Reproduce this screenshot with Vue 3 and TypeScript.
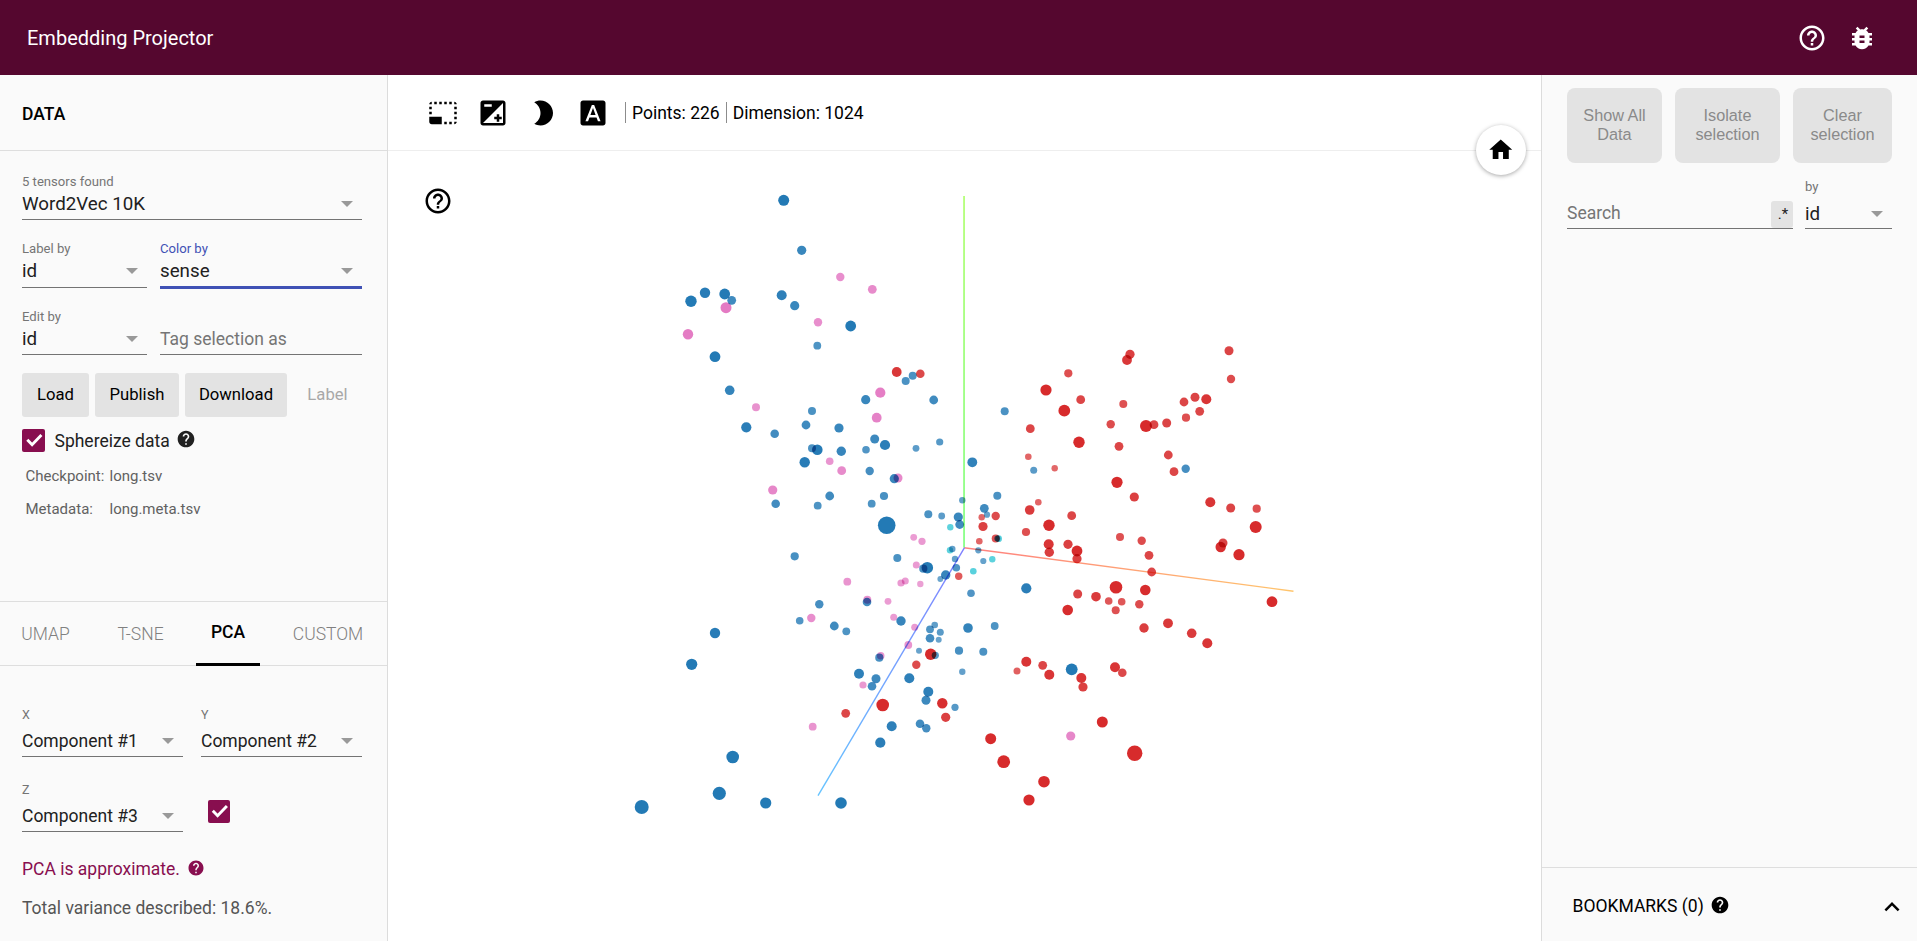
<script setup lang="ts">
import { computed } from 'vue'

type Row = [number, number, number]

const icons = {
  helpOutline:
    'M11 18h2v-2h-2v2zm1-16C6.48 2 2 6.48 2 12s4.48 10 10 10 10-4.48 10-10S17.52 2 12 2zm0 18c-4.41 0-8-3.59-8-8s3.59-8 8-8 8 3.59 8 8-3.59 8-8 8zm0-14c-2.21 0-4 1.79-4 4h2c0-1.1.9-2 2-2s2 .9 2 2c0 2-3 1.75-3 5h2c0-2.25 3-2.5 3-5 0-2.21-1.79-4-4-4z',
  help: 'M12 2C6.48 2 2 6.48 2 12s4.48 10 10 10 10-4.48 10-10S17.52 2 12 2zm1 17h-2v-2h2v2zm2.07-7.75l-.9.92C13.45 12.9 13 13.5 13 15h-2v-.5c0-1.1.45-2.1 1.17-2.83l1.24-1.26c.37-.36.59-.86.59-1.41 0-1.1-.9-2-2-2s-2 .9-2 2H8c0-2.21 1.79-4 4-4s4 1.79 4 4c0 .88-.36 1.68-.93 2.25z',
  bug: 'M20 8h-2.81c-.45-.78-1.07-1.45-1.82-1.96L17 4.41 15.59 3l-2.17 2.17C12.96 5.06 12.49 5 12 5c-.49 0-.96.06-1.41.17L8.41 3 7 4.41l1.62 1.63C7.88 6.55 7.26 7.22 6.81 8H4v2h2.09c-.05.33-.09.66-.09 1v1H4v2h2v1c0 .34.04.67.09 1H4v2h2.81c1.04 1.79 2.97 3 5.19 3s4.15-1.21 5.19-3H20v-2h-2.09c.05-.33.09-.66.09-1v-1h2v-2h-2v-1c0-.34-.04-.67-.09-1H20V8zm-6 8h-4v-2h4v2zm0-4h-4v-2h4v2z',
  home: 'M10 20v-6h4v6h5v-8h3L12 3 2 12h3v8z',
  expandLess: 'M12 8l-6 6 1.41 1.41L12 10.83l4.59 4.58L18 14z',
  check: 'M5.3 10.700L10.100 15.700L19.400 6',
}

const tools = [
  'M23 15h-2v2h2v-2zm0-4h-2v2h2v-2zm0 8h-2v2c1 0 2-1 2-2zM15 3h-2v2h2V3zm8 4h-2v2h2V7zm-2-4v2h2c0-1-1-2-2-2zM3 21h8v-6H1v4c0 1.1.9 2 2 2zM3 7H1v2h2V7zm12 12h-2v2h2v-2zm4-16h-2v2h2V3zm0 16h-2v2h2v-2zM3 3C2 3 1 4 1 5h2V3zm0 8H1v2h2v-2zm8-8H9v2h2V3zM7 3H5v2h2V3z',
  'M15 17v2h2v-2h2v-2h-2v-2h-2v2h-2v2h2zm5-15H4c-1.100 0-2 .9-2 2v16c0 1.100.9 2 2 2h16c1.100 0 2-.9 2-2V4c0-1.100-.9-2-2-2zM5 5h6v2H5V5zm15 15H4L20 4v16z',
  'M10 2c-1.820 0-3.530.5-5 1.350C7.990 5.080 10 8.300 10 12s-2.010 6.920-5 8.650C6.470 21.500 8.180 22 10 22c5.520 0 10-4.480 10-10S15.520 2 10 2z',
  'M9.930 13.500h4.140L12 7.980zM20 2H4c-1.100 0-2 .9-2 2v16c0 1.100.9 2 2 2h16c1.100 0 2-.9 2-2V4c0-1.100-.9-2-2-2zm-4.050 16.500l-1.140-3H9.170l-1.120 3H5.960l5.110-13h1.860l5.110 13h-2.090z',
]

const tabs = ['UMAP', 'T-SNE', 'PCA', 'CUSTOM']
const activeTab = 'PCA'

// Projected points of each sense: x, y, radius.
const clusters: { color: string; rows: Row[] }[] = [
  {
    color: '#1f77b4',
    rows: [
      [783.7, 200.3, 5.5], [801.7, 250.3, 4.6], [691, 301.3, 5.7], [705, 292.7, 5.2], [724.7, 294, 5.4],
      [731.7, 300.3, 4.4], [781.7, 295.3, 5], [794.7, 305.7, 4.6], [850.7, 326, 5.4], [817.3, 345.7, 3.9],
      [715, 356.7, 5.4], [729.7, 390.3, 4.8], [746.3, 427.3, 5.1], [774.7, 433.7, 4.3], [812, 411, 4],
      [806, 425, 4.4], [839, 428, 4.6], [812, 448.3, 4], [817.3, 449.7, 5.3], [841.3, 451.3, 4.7],
      [804.7, 462.3, 5.2], [912.7, 375.7, 4], [905.7, 381, 4], [865.7, 399.7, 4.6], [933.7, 400, 4.4],
      [874.7, 439, 4.5], [885, 445, 5.1], [866, 449.7, 3.8], [916, 448.3, 3.4], [939.7, 442, 3.6],
      [869.7, 471, 4.2], [894.3, 478.7, 4.6], [829.7, 496, 4.4], [884, 496, 4.1], [871.7, 503.7, 3.9],
      [775.7, 503.7, 4.3], [817.7, 505.7, 3.9], [928.3, 514.3, 4], [941.7, 516, 3.4], [886.7, 525.3, 8.8],
      [794.7, 556.3, 4.1], [897.3, 558, 4], [923.3, 568.7, 4.1], [927.3, 567.7, 5.8], [945.7, 575, 4.7],
      [940.3, 579, 2.9], [867, 602, 4.3], [819.3, 604.3, 4.2], [799.7, 620.7, 3.8], [834.3, 626, 4.4],
      [846.3, 631.3, 3.9], [715, 633, 5.2], [691.7, 664.3, 5.6], [901, 621, 4.7], [934.7, 625, 3.3],
      [930, 629.3, 3.9], [940.3, 632.3, 3.5], [930, 638.3, 4.3], [938.7, 639.7, 3], [919, 650.7, 3],
      [935.3, 655.3, 3.6], [879.3, 657.7, 4.1], [859, 673.7, 5], [876, 678.7, 4.5], [872, 686.3, 4.3],
      [909.3, 678.3, 5], [928.3, 691.7, 5], [926, 700.3, 4.5], [920, 723.7, 4.3], [926.3, 728.3, 4.2],
      [891.7, 726.3, 5], [880.3, 742.7, 5.1], [732.7, 757, 6.3], [719.3, 793.3, 6.6], [641.7, 807, 7],
      [765.7, 803, 5.6], [841, 803, 5.8], [1004.7, 411.3, 4], [972.3, 462.3, 4.9], [1033.7, 470.3, 3.5],
      [1185.7, 468.7, 4.2], [997.3, 495.7, 4], [962.3, 500.3, 3.2], [984.3, 508.3, 4.4], [987, 514.7, 3.1],
      [958.3, 517, 4.6], [959.7, 524.5, 4.4], [952.3, 549, 3.2], [978.3, 550.3, 3.1], [997.3, 538.5, 3],
      [955, 559, 3.2], [983.3, 561, 3.1], [956.3, 567.7, 3.8], [971, 593.3, 3.8], [1026.3, 588.3, 5.1],
      [968, 628, 4.8], [994.7, 626, 3.9], [959, 650.7, 4.1], [983.3, 651.7, 4], [962.3, 671.7, 3.2],
      [955, 707.3, 3.6], [1071.7, 669.3, 5.9],
    ],
  },
  {
    color: '#e377c2',
    rows: [
      [840.3, 277, 4.2], [872.3, 289.3, 4.4], [726, 307.7, 5.5], [688, 334.3, 5.2], [818, 322.3, 4.2],
      [756, 407.3, 4], [880.3, 392.7, 5.1], [876.7, 417.7, 4.9], [829.7, 461.3, 3.8], [841.7, 470.7, 4.4],
      [898, 478, 4.5], [772.7, 490, 4.6], [913.7, 537.3, 3.4], [922, 541.3, 3.6], [916.3, 565, 3.5],
      [847.3, 581.7, 3.9], [901, 583, 3.6], [905.3, 581, 3.5], [920.3, 584, 3.2], [867.3, 599.7, 4],
      [888, 601.3, 3.4], [811.3, 618, 4.2], [893.7, 617.3, 3.5], [914.7, 627.3, 3.5], [908.3, 645, 3.9],
      [880.7, 655.7, 3.8], [863, 685, 3.6], [812.7, 726.7, 3.9], [1070.7, 736, 4.6],
    ],
  },
  {
    color: '#d62728',
    rows: [
      [896.7, 372, 4.9], [920.3, 373.7, 4.3], [930.7, 654.3, 5.7], [916.3, 664.7, 4.2], [882.7, 705, 6.3],
      [845.7, 713.3, 4.4], [942.3, 703.3, 5.2], [945.7, 717.3, 4.6], [1130, 354.3, 4.6], [1127, 360, 4.9],
      [1229, 350.7, 4.5], [1231, 379, 4.2], [1068.3, 373.3, 4.1], [1046, 390, 5.6], [1080.7, 399.7, 4.4],
      [1123.3, 404, 4], [1064.3, 410.7, 5.9], [1184, 402, 4.4], [1195, 397.3, 4.5], [1206.3, 399.3, 5],
      [1199.7, 411.3, 4.4], [1186, 417.7, 4.1], [1166.7, 423, 4.5], [1154, 424.7, 4.4], [1146, 426, 6],
      [1110.7, 424.3, 4.2], [1030.3, 428.7, 4.4], [1079, 442.3, 5.7], [1119, 446.3, 4.4], [1028.3, 456.7, 3.3],
      [1054.7, 468.3, 3.2], [1168.3, 455, 4.4], [1174, 471.7, 4.4], [1117, 482.3, 5.6], [1134.3, 497, 4.6],
      [1038.3, 502.3, 3.3], [1029.7, 510, 4.8], [1210.3, 502.3, 5], [1230.7, 508, 4.5], [1256.7, 508.7, 4.1],
      [1255.7, 527, 6], [1071.7, 515.7, 4.4], [1049, 525.3, 5.7], [1026, 532, 4.1], [1120, 537, 4],
      [1141.7, 540.7, 4.2], [1223, 543, 4.5], [1220.7, 547, 5.2], [1239, 554.7, 5.6], [1048.7, 544.3, 5],
      [1049.3, 552.3, 4.7], [1068, 544.3, 4.6], [1077, 551, 5.4], [1077, 558.7, 4.6], [1149, 555.3, 4.4],
      [1151.7, 572, 4.4], [981.7, 517.2, 3.2], [995.7, 516, 4.2], [983, 526.5, 4.6], [995.7, 538.5, 4],
      [979.3, 541.3, 3.3], [958.7, 576.3, 3.7], [1116, 587.3, 6.3], [1145.3, 590, 5.3], [1077.7, 594, 4.5],
      [1096, 596.7, 4.8], [1108.7, 601, 3.8], [1121.7, 601.7, 3.8], [1139.3, 604.3, 4.2], [1115.7, 610.3, 4],
      [1067.7, 610, 5.3], [1272, 601.7, 5.4], [1144, 628, 4.7], [1168, 623.3, 4.9], [1191.7, 633.3, 4.8],
      [1207.3, 643.3, 5], [1026.3, 661.7, 5], [1042.7, 665.3, 4.4], [1017, 671, 3.5], [1049.3, 674.7, 5],
      [1081.3, 678, 5], [1083, 687, 4.6], [1115, 667.3, 5], [1122.3, 672.7, 4.3], [1102.3, 722, 5.5],
      [1134.7, 753.3, 7.7], [990.7, 738.7, 5.5], [1003.7, 761.7, 6.4], [1044, 781.7, 5.8], [1029, 800, 5.6],
    ],
  },
  {
    color: '#17becf',
    rows: [
      [950.3, 527.3, 3.2], [950, 550.3, 3.2], [998.6, 538.7, 3.4], [992.3, 559.3, 3.2], [973.3, 571.3, 3.3],
    ],
  },
]

// Distant points are smaller and fade into the white fog.
const points = computed(() =>
  clusters.flatMap(({ color, rows }) =>
    rows.map(([x, y, r]) => ({ x, y, r, color, opacity: Math.min(0.98, 0.66 + (r - 2.9) * 0.13) })),
  ),
)
</script>

<template>
  <div class="app">
    <header class="bar">
      <h1>Embedding Projector</h1>
      <div class="bar-icons">
        <svg class="icon" viewBox="0 0 24 24"><path :d="icons.helpOutline" /></svg>
        <svg class="icon" viewBox="0 0 24 24"><path :d="icons.bug" /></svg>
      </div>
    </header>

    <div class="main">
      <aside class="left">
        <div class="panel-title">DATA</div>

        <section class="data">
          <div class="field">
            <label>5 tensors found</label>
            <div class="value big"><span>Word2Vec 10K</span><i class="caret"></i></div>
          </div>
          <div class="pair labels">
            <div class="field">
              <label>Label by</label>
              <div class="value big"><span>id</span><i class="caret"></i></div>
            </div>
            <div class="field focused">
              <label>Color by</label>
              <div class="value big"><span>sense</span><i class="caret"></i></div>
            </div>
          </div>
          <div class="pair edit">
            <div class="field">
              <label>Edit by</label>
              <div class="value big"><span>id</span><i class="caret"></i></div>
            </div>
            <div class="field">
              <label></label>
              <div class="value hint"><span>Tag selection as</span></div>
            </div>
          </div>

          <div class="buttons">
            <button class="load">Load</button>
            <button class="publish">Publish</button>
            <button class="download">Download</button>
            <button class="flat">Label</button>
          </div>

          <div class="sphere">
            <span class="checkbox"><svg viewBox="0 0 23 23"><path :d="icons.check" /></svg></span>
            <span>Sphereize data</span>
            <svg class="icon small" viewBox="0 0 24 24"><path :d="icons.help" /></svg>
          </div>

          <dl class="files">
            <dt>Checkpoint:</dt><dd>long.tsv</dd>
            <dt>Metadata:</dt><dd>long.meta.tsv</dd>
          </dl>
        </section>

        <nav class="tabs">
          <div v-for="tab in tabs" :key="tab" class="tab" :class="{ active: tab === activeTab }">{{ tab }}</div>
        </nav>

        <section class="pca">
          <div class="axes">
            <div class="field">
              <label>X</label>
              <div class="value"><span>Component #1</span><i class="caret"></i></div>
            </div>
            <div class="field">
              <label>Y</label>
              <div class="value"><span>Component #2</span><i class="caret"></i></div>
            </div>
            <div class="field">
              <label>Z</label>
              <div class="value"><span>Component #3</span><i class="caret"></i></div>
            </div>
            <span class="checkbox z"><svg viewBox="0.500 0 23 23"><path :d="icons.check" /></svg></span>
          </div>
          <div class="approx">
            <span>PCA is approximate.</span>
            <svg class="icon" viewBox="0 0 24 24"><path :d="icons.help" /></svg>
          </div>
          <div class="variance">Total variance described: 18.6%.</div>
        </section>
      </aside>

      <main class="center">
        <div class="toolbar">
          <svg v-for="(d, i) in tools" :key="i" class="icon" viewBox="0 0 24 24"><path :d="d" /></svg>
          <div class="stat first">Points: 226</div>
          <div class="stat">Dimension: 1024</div>
        </div>
        <div class="home"><svg viewBox="0 0 24 24"><path :d="icons.home" /></svg></div>
        <div class="stage">
          <svg class="plot" viewBox="388 151 1153 790">
            <defs>
              <linearGradient id="ax" gradientUnits="userSpaceOnUse" x1="964" y1="548" x2="1293" y2="591">
                <stop offset="0" stop-color="#ff8080" /><stop offset="1" stop-color="#ffc56c" />
              </linearGradient>
              <linearGradient id="ay" gradientUnits="userSpaceOnUse" x1="964" y1="548" x2="964" y2="196">
                <stop offset="0" stop-color="#80ff80" /><stop offset="1" stop-color="#b0ff70" />
              </linearGradient>
              <linearGradient id="az" gradientUnits="userSpaceOnUse" x1="964" y1="548" x2="818" y2="796">
                <stop offset="0" stop-color="#8080ff" /><stop offset="1" stop-color="#66c4ff" />
              </linearGradient>
            </defs>
            <path d="M964 547.700L1293.500 591.200" stroke="url(#ax)" />
            <path d="M963.200 196h1.700V547.500h-1.700z" fill="url(#ay)" stroke="none" />
            <path d="M964.500 547.700L818 795.700" stroke="url(#az)" />
            <circle
              v-for="(p, i) in points"
              :key="i"
              :cx="p.x"
              :cy="p.y"
              :r="p.r"
              :fill="p.color"
              :fill-opacity="p.opacity"
            />
          </svg>
          <svg class="icon hint-icon" viewBox="0 0 24 24"><path :d="icons.helpOutline" /></svg>
        </div>
      </main>

      <aside class="right">
        <div class="actions">
          <button>Show All<br />Data</button>
          <button>Isolate<br />selection</button>
          <button>Clear<br />selection</button>
        </div>
        <div class="search">
          <div class="field">
            <label></label>
            <div class="value hint"><span>Search</span><span class="regex">.*</span></div>
          </div>
          <div class="field by">
            <label>by</label>
            <div class="value big"><span>id</span><i class="caret"></i></div>
          </div>
        </div>
        <div class="bookmarks">
          <span>BOOKMARKS (0)</span>
          <svg class="icon small" viewBox="0 0 24 24"><path :d="icons.help" /></svg>
          <svg class="icon expand" viewBox="0 0 24 24"><path :d="icons.expandLess" /></svg>
        </div>
      </aside>
    </div>
  </div>
</template>

<style>
body {
  overflow: hidden;
}
</style>

<style scoped>
.app {
  display: flex;
  flex-direction: column;
  height: 941px;
  font: 400 17.5px Roboto, sans-serif;
  color: #212121;
  background: #fff;
}
.app * {
  box-sizing: border-box;
}
.icon {
  display: block;
  width: 30px;
  height: 30px;
  fill: currentColor;
  flex: none;
}
.icon.small {
  width: 20px;
  height: 20px;
}
.bar {
  display: flex;
  align-items: center;
  justify-content: space-between;
  height: 75px;
  flex: none;
  padding: 0 40px 0 27px;
  background: #55072f;
  color: #fff;
}
.bar h1 {
  margin: 0;
  font-size: 20px;
  font-weight: 400;
}
.bar-icons {
  display: flex;
  gap: 20px;
}
.main {
  display: flex;
  flex: 1;
  min-height: 0;
}
.left {
  display: flex;
  flex-direction: column;
  width: 388px;
  flex: none;
  background: #fafafa;
  border-right: 1px solid #dcdcdc;
}
.panel-title {
  height: 76px;
  padding: 0 22px;
  line-height: 79px;
  font-weight: 500;
  color: #000;
  border-bottom: 1px solid #dedede;
}
.data {
  display: flex;
  flex-direction: column;
  height: 450px;
  padding: 23px 25px 0 22px;
}
.field {
  display: flex;
  flex-direction: column;
  min-width: 0;
}
.field label {
  height: 16px;
  font-size: 13.125px;
  line-height: 16px;
  color: #757575;
}
.value {
  display: flex;
  justify-content: space-between;
  height: 30px;
  line-height: 29px;
  border-bottom: 1px solid #737373;
  white-space: nowrap;
}
.big {
  font-size: 18.75px;
}
.hint {
  color: #757575;
}
.caret {
  width: 0;
  height: 0;
  margin: 11px 9px 0 0;
  border: 6.5px solid transparent;
  border-top: 6.5px solid #999;
  border-bottom: 0;
}
.pair {
  display: grid;
  grid-template-columns: 125px 202px;
  gap: 13px;
}
.labels {
  margin-top: 21px;
}
.labels .value {
  height: 31px;
}
.edit {
  margin-top: 20px;
}
.focused label {
  color: #3f51b5;
}
.labels .focused .value {
  height: 32px;
  border-bottom: 3px solid #3f51b5;
}
.buttons {
  display: flex;
  gap: 6px;
  margin-top: 18px;
}
.buttons button {
  flex: none;
  height: 44px;
  padding: 0 0 2px;
  border: 0;
  border-radius: 3px;
  background: #e3e3e3;
  color: #000;
  font: 400 16.670px Roboto, sans-serif;
}
.buttons .load {
  width: 67px;
}
.buttons .publish {
  width: 84px;
}
.buttons .download {
  width: 102px;
}
.buttons .flat {
  width: 69px;
  background: none;
  color: #a8a8a8;
}
.sphere {
  display: flex;
  align-items: center;
  margin-top: 12px;
  height: 23px;
}
.sphere .icon {
  margin: -3px 0 0 6px;
}
.checkbox {
  flex: none;
  width: 23px;
  height: 23px;
  margin-right: 9.500px;
  border-radius: 2px;
  background: #880e4f;
}
.checkbox svg {
  display: block;
  width: 23px;
  height: 23px;
  fill: none;
  stroke: #fff;
  stroke-width: 2.900;
}
.files {
  display: grid;
  grid-template-columns: 84px 1fr;
  margin: 8px 0 0 3.500px;
  font-size: 15px;
  line-height: 33px;
  color: #616161;
}
.files dd {
  margin: 0;
}
.tabs {
  display: grid;
  grid-template-columns: 91px 99px 76px 121px;
  height: 65px;
  border-top: 1px solid #dedede;
  border-bottom: 1px solid #dedede;
}
.tab {
  text-align: center;
  line-height: 64px;
  font-weight: 300;
  color: #808080;
}
.tab:last-child {
  padding-left: 3px;
}
.tab.active {
  height: 64px;
  margin: 0 6px;
  line-height: 60px;
  font-weight: 500;
  color: #000;
  border-bottom: 3px solid #000;
}
.pca {
  padding: 41px 25px 0 22px;
}
.axes {
  display: grid;
  grid-template-columns: 161px 161px;
  gap: 25px 18px;
}
.axes label {
  height: 20px;
  font-size: 12.5px;
  line-height: 16px;
}
.axes .value {
  line-height: 28px;
}
.checkbox.z {
  align-self: start;
  width: 22px;
  margin: 18px 0 0 7px;
  overflow: hidden;
}
.approx {
  display: flex;
  align-items: center;
  margin-top: 24px;
  line-height: 26px;
  color: #880e4f;
}
.approx .icon {
  width: 18px;
  height: 18px;
  margin: -2px 0 0 7px;
}
.variance {
  margin-top: 13px;
  line-height: 26px;
  color: #555;
}
.center {
  position: relative;
  display: flex;
  flex-direction: column;
  flex: 1;
  color: #000;
}
.toolbar {
  display: flex;
  align-items: center;
  gap: 20px;
  height: 76px;
  flex: none;
  padding-left: 40px;
  border-bottom: 1px solid #eee;
}
.stat {
  height: 21px;
  padding-left: 6px;
  margin-left: -14px;
  line-height: 23px;
  border-left: 1px solid #8c8c8c;
}
.stat.first {
  margin-left: -3px;
}
.home {
  position: absolute;
  top: 50px;
  right: 15px;
  display: flex;
  align-items: center;
  justify-content: center;
  width: 50px;
  height: 50px;
  border-radius: 50%;
  background: #fff;
  box-shadow: 0 1px 4px rgba(0, 0, 0, 0.35);
  z-index: 2;
}
.home svg {
  width: 27.500px;
  height: 27.500px;
}
.stage {
  position: relative;
  flex: 1;
}
.plot {
  display: block;
  width: 1153px;
  height: 790px;
  isolation: isolate;
}
.plot path {
  stroke-width: 1.400;
}
.plot circle {
  mix-blend-mode: multiply;
}
.hint-icon {
  position: absolute;
  top: 35px;
  left: 35px;
}
.right {
  display: flex;
  flex-direction: column;
  width: 376px;
  flex: none;
  background: #fafafa;
  border-left: 1px solid #dcdcdc;
}
.actions {
  display: grid;
  grid-template-columns: 95px 105px 99px;
  gap: 13px;
  padding: 13px 0 0 25px;
}
.actions button {
  height: 75px;
  padding: 0 0 2px;
  border: 0;
  border-radius: 8px;
  background: #e3e3e3;
  color: #8a8a8a;
  font: 400 16.250px/19px "Liberation Sans", Arial, sans-serif;
}
.search {
  display: grid;
  grid-template-columns: 226px 87px;
  gap: 12px;
  padding: 16px 0 0 25px;
}
.search label {
  height: 21px;
}
.search .value {
  height: 29px;
}
.search .hint {
  line-height: 27px;
}
.regex {
  width: 22px;
  height: 27px;
  margin-top: 1px;
  padding-left: 2px;
  border-radius: 3px;
  background: #e3e3e3;
  color: #222;
  font-size: 15px;
  text-align: center;
}
.bookmarks {
  display: flex;
  align-items: center;
  height: 74px;
  margin-top: auto;
  padding: 3px 10px 0 30.500px;
  border-top: 1px solid #dedede;
  color: #000;
}
.bookmarks .small {
  margin: -2px 0 0 6.500px;
}
.bookmarks .expand {
  margin: 2px 0 0 auto;
}
</style>
